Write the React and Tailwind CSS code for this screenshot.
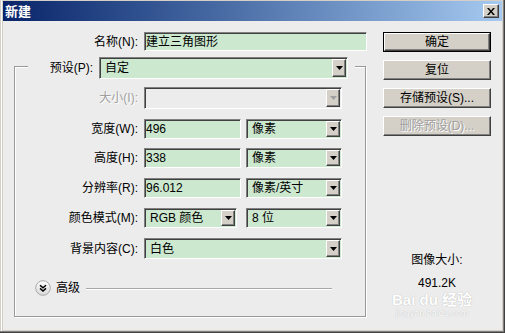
import React from 'react';

const font = 'font-["Liberation_Sans","Noto_Sans_CJK_SC",sans-serif]';

const sunken =
  'border border-t-[#808080] border-l-[#808080] border-r-white border-b-white shadow-[inset_1px_1px_0_#404040]';

const Arrow = ({ disabled }) => (
  <div className="h-full w-[14px] shrink-0 flex items-center justify-center bg-[#d4d0c8] border border-t-white border-l-white border-r-[#404040] border-b-[#404040] shadow-[inset_-1px_-1px_0_#808080]">
    <svg width="7" height="4" viewBox="0 0 7 4">
      <polygon points="0,0 7,0 3.5,4" fill={disabled ? '#a0a0a0' : '#000'} />
    </svg>
  </div>
);

const Combo = ({ value, className, disabled }) => (
  <div className={`${sunken} ${className} flex items-stretch ${disabled ? 'bg-[#ececec]' : 'bg-[#cce8cf]'}`}>
    <div className="flex-1 flex items-center pl-[5px] text-[12px] text-black whitespace-pre">{value}</div>
    <div className="p-px pr-[1px]">
      <Arrow disabled={disabled} />
    </div>
  </div>
);

const Field = ({ value, className }) => (
  <div className={`${sunken} ${className} bg-[#cce8cf] flex items-center pl-[1px] text-[12px] text-black`}>
    {value}
  </div>
);

const Label = ({ children, className, disabled }) => (
  <div
    className={`${className} text-right text-[12px] leading-none ${
      disabled ? 'text-[#a0a0a0] [text-shadow:1px_1px_0_#fff]' : 'text-black'
    }`}
  >
    {children}
  </div>
);

const Button = ({ children, isDefault, disabled }) => {
  const face = (
    <div className="h-full w-full flex items-center justify-center bg-[#d4d0c8] border border-t-white border-l-white border-r-[#404040] border-b-[#404040] shadow-[inset_-1px_-1px_0_#808080]">
      <span className={disabled ? 'text-[#a0a0a0] [text-shadow:1px_1px_0_#fff]' : 'text-black'}>{children}</span>
    </div>
  );
  return (
    <div className={`w-[108px] h-[20px] text-[12px] ${isDefault ? 'border border-black' : ''}`}>{face}</div>
  );
};

const Row = ({ label, children, className = '', disabled }) => (
  <div className={`flex items-center ${className}`}>
    <Label className="w-[123px]" disabled={disabled}>{label}</Label>
    <div className="ml-[6px] flex gap-[5px]">{children}</div>
  </div>
);

export default function App() {
  return (
    <div
      className={`${font} w-[505px] h-[333px] bg-[#d4d0c8] pt-[1px] px-[3px] pb-[3px] shadow-[inset_-1px_-1px_0_#404040,inset_-2px_-2px_0_#808080,inset_1px_0_0_#d4d0c8,inset_2px_0_0_#fff] flex flex-col`}
    >
      <div className="h-[20px] shrink-0 bg-gradient-to-r from-[#0a246a] to-[#a6caf0] flex items-center pl-[2px] pr-[3px]">
        <span className="text-white font-bold text-[13px] leading-none">新建</span>
        <div className="ml-auto w-[16px] h-[14px] bg-[#d4d0c8] border border-t-white border-l-white border-r-[#404040] border-b-[#404040] shadow-[inset_-1px_-1px_0_#808080] flex items-center justify-center">
          <svg width="8" height="7" viewBox="0 0 8 7">
            <path d="M0 0h2l2 2.5 2-2.5h2l-3 3.5 3 3.5h-2l-2-2.5-2 2.5h-2l3-3.5z" fill="#000" />
          </svg>
        </div>
      </div>

      <div className="flex-1 bg-[#ececec] flex">
        <div className="w-[367px] shrink-0">
          <div className="mt-[11px] flex items-center">
            <Label className="w-[135px]">名称(N):</Label>
            <Field value="建立三角图形" className="ml-[6px] w-[223px] h-[19px]" />
          </div>

          <div className="mt-[15px] ml-[11px] w-[352px] h-[251px] border border-[#999] shadow-[1px_1px_0_#fff,inset_1px_1px_0_#fff]">
            <div className="-mt-[10px] ml-[13px] w-[327px] bg-[#ececec] flex items-center h-[22px]">
              <Label className="w-[65px]">预设(P):</Label>
              <Combo value="自定" className="ml-[6px] w-[249px] h-[22px]" />
            </div>

            <Row label="大小(I):" className="mt-[8px]" disabled>
              <Combo value="" className="w-[198px] h-[22px]" disabled />
            </Row>
            <Row label="宽度(W):" className="mt-[10px]">
              <Field value="496" className="w-[97px] h-[20px]" />
              <Combo value="像素" className="w-[96px] h-[20px]" />
            </Row>
            <Row label="高度(H):" className="mt-[9px]">
              <Field value="338" className="w-[97px] h-[20px]" />
              <Combo value="像素" className="w-[96px] h-[20px]" />
            </Row>
            <Row label="分辨率(R):" className="mt-[10px]">
              <Field value="96.012" className="w-[97px] h-[20px]" />
              <Combo value="像素/英寸" className="w-[96px] h-[20px]" />
            </Row>
            <Row label="颜色模式(M):" className="mt-[10px]">
              <Combo value="RGB 颜色" className="w-[93px] h-[20px]" />
              <Combo value="8 位" className="ml-[4px] w-[96px] h-[20px]" />
            </Row>
            <Row label="背景内容(C):" className="mt-[10px]">
              <Combo value="白色" className="w-[198px] h-[21px]" />
            </Row>

            <div className="mt-[21px] ml-[20px] h-[16px] flex items-center">
              <svg width="16" height="16" viewBox="0 0 16 16">
                <defs>
                  <linearGradient id="adv" x1="0" y1="0" x2="0" y2="1">
                    <stop offset="0" stopColor="#ffffff" />
                    <stop offset="1" stopColor="#d8d8d8" />
                  </linearGradient>
                </defs>
                <circle cx="8" cy="8" r="7.3" fill="url(#adv)" stroke="#a8a8a8" strokeWidth="1" />
                <path d="M5 5.2l3 2.6 3-2.6M5 8.4l3 2.6 3-2.6" fill="none" stroke="#000" strokeWidth="1.5" />
              </svg>
              <span className="ml-[5px] text-[12px] text-black">高级</span>
              <div className="ml-[6px] w-[246px] h-px bg-[#a8a8a8] shadow-[0_1px_0_#fff]" />
            </div>
          </div>
        </div>

        <div className="relative ml-[13px] w-[108px] flex flex-col">
          <div className="mt-[11px] flex flex-col gap-[8px]">
            <Button isDefault>确定</Button>
            <Button>复位</Button>
            <Button>存储预设(S)...</Button>
            <Button disabled>删除预设(D)...</Button>
          </div>
          <div className="mt-[117px] text-center text-[12px] leading-[14px] text-black">图像大小:</div>
          <div className="mt-[9px] text-center text-[12px] leading-[14px] text-black">491.2K</div>
          <div className="absolute left-[5px] top-[271px] w-[88px] flex flex-col items-center whitespace-nowrap text-white [text-shadow:0_0_1px_#a8a8a8]">
            <span className="font-bold text-[15px] leading-[16px]">Bai du 经验</span>
            <span className="text-[9px] leading-[10px]">jingyan.baidu.com</span>
          </div>
        </div>
      </div>
    </div>
  );
}
